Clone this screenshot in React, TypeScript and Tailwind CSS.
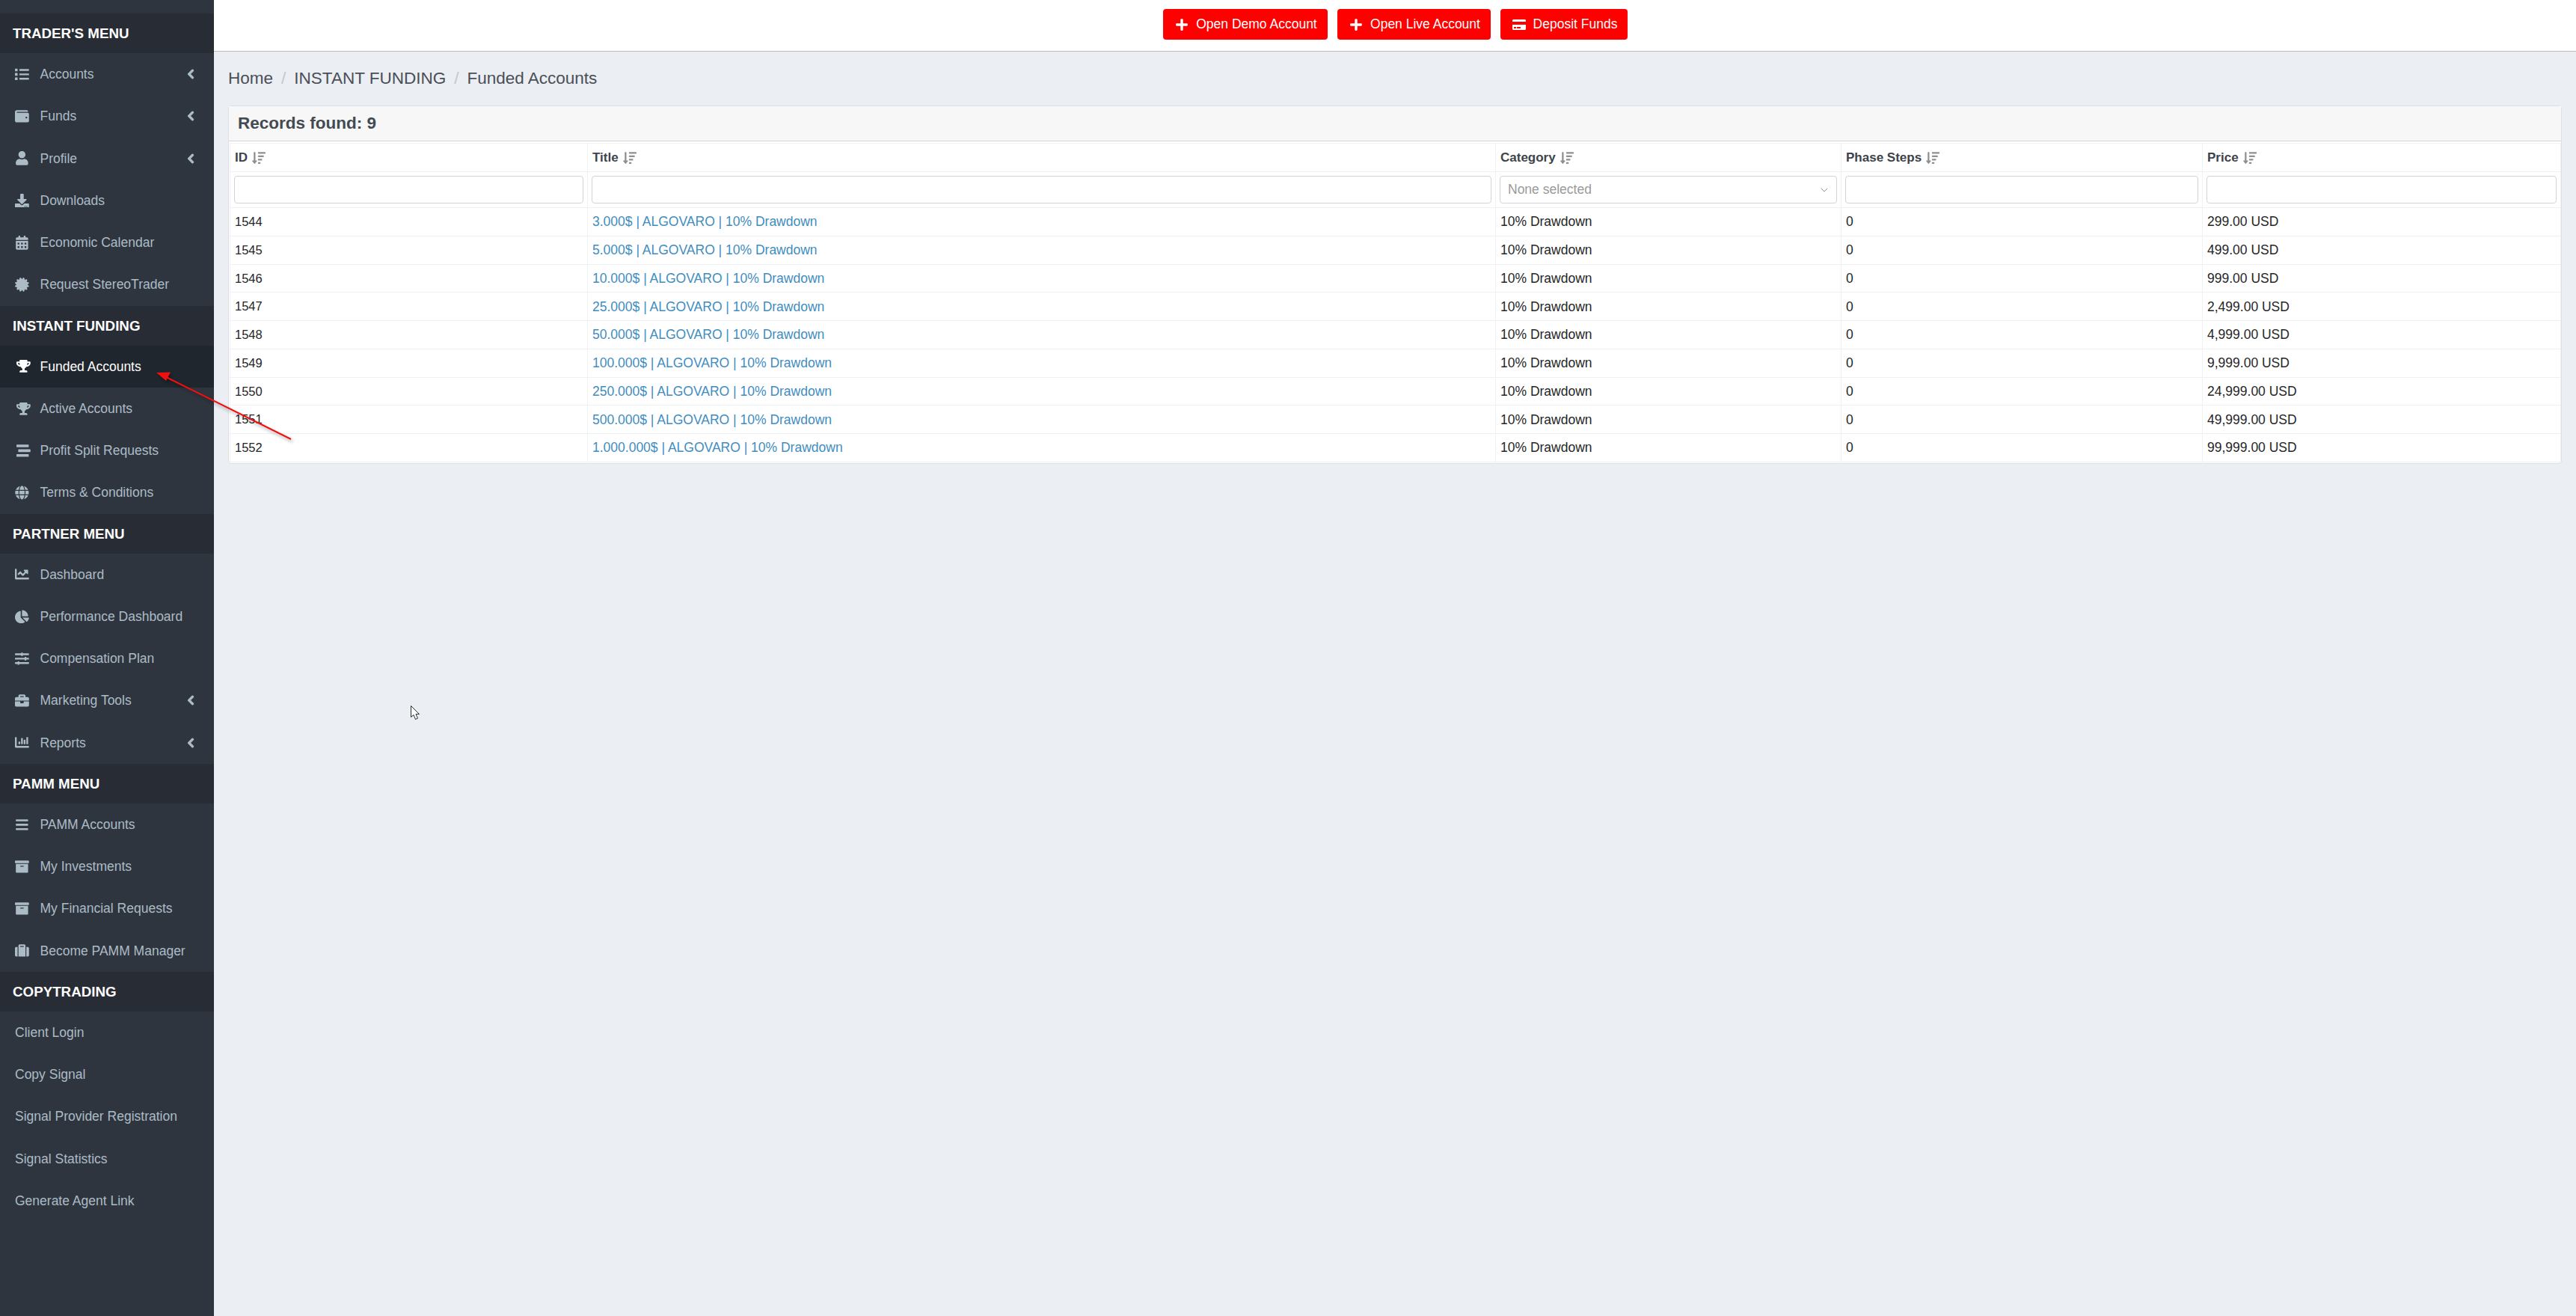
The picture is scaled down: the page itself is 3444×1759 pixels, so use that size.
import { ChevronDown } from "lucide-react";
import {
  FaArchive, FaBars, FaBriefcase, FaCalendarAlt, FaCertificate, FaChartBar, FaChartLine, FaChartPie,
  FaChevronLeft, FaCreditCard, FaDownload, FaGlobe, FaList, FaPlus, FaSlidersH, FaSortAmountDown,
  FaStream, FaSuitcase, FaTrophy, FaUser, FaWallet,
} from "react-icons/fa";

const MENU: any[] = [
  { title: "TRADER'S MENU", items: [
    { l: "Accounts", i: FaList, more: true },
    { l: "Funds", i: FaWallet, more: true },
    { l: "Profile", i: FaUser, more: true },
    { l: "Downloads", i: FaDownload },
    { l: "Economic Calendar", i: FaCalendarAlt },
    { l: "Request StereoTrader", i: FaCertificate },
  ] },
  { title: "INSTANT FUNDING", items: [
    { l: "Funded Accounts", i: FaTrophy, active: true, inset: true },
    { l: "Active Accounts", i: FaTrophy, inset: true },
    { l: "Profit Split Requests", i: FaStream, inset: true },
    { l: "Terms & Conditions", i: FaGlobe },
  ] },
  { title: "PARTNER MENU", items: [
    { l: "Dashboard", i: FaChartLine },
    { l: "Performance Dashboard", i: FaChartPie },
    { l: "Compensation Plan", i: FaSlidersH },
    { l: "Marketing Tools", i: FaBriefcase, more: true },
    { l: "Reports", i: FaChartBar, more: true },
  ] },
  { title: "PAMM MENU", items: [
    { l: "PAMM Accounts", i: FaBars },
    { l: "My Investments", i: FaArchive },
    { l: "My Financial Requests", i: FaArchive },
    { l: "Become PAMM Manager", i: FaSuitcase },
  ] },
  { title: "COPYTRADING", items: [
    { l: "Client Login" },
    { l: "Copy Signal" },
    { l: "Signal Provider Registration" },
    { l: "Signal Statistics" },
    { l: "Generate Agent Link" },
  ] },
];

const ROWS = [
  ["1544", "3.000$", "299.00 USD"],
  ["1545", "5.000$", "499.00 USD"],
  ["1546", "10.000$", "999.00 USD"],
  ["1547", "25.000$", "2,499.00 USD"],
  ["1548", "50.000$", "4,999.00 USD"],
  ["1549", "100.000$", "9,999.00 USD"],
  ["1550", "250.000$", "24,999.00 USD"],
  ["1551", "500.000$", "49,999.00 USD"],
  ["1552", "1.000.000$", "99,999.00 USD"],
];

const COLS = ["ID", "Title", "Category", "Phase Steps", "Price"];

function Sidebar() {
  return (
    <aside className="w-[286px] shrink-0 bg-[#2f353f] pt-[18px] text-[17.5px] text-[#abbcc6]">
      {MENU.map((g) => (
        <div key={g.title}>
          <div className="h-[53px] bg-[#282c35] pl-[17px] text-[18.75px] leading-[53px] font-bold text-white">{g.title}</div>
          {g.items.map((it: any) => {
            const Icon = it.i;
            return (
              <div key={it.l} className={`flex h-[56.25px] items-center pl-[20px] ${it.active ? "bg-[#20262d] text-white" : ""}`}>
                {Icon && (
                  <span className={`w-[33.5px] shrink-0 ${it.inset ? "pl-[2px]" : ""}`}>
                    <Icon className="h-[18.75px] w-auto" />
                  </span>
                )}
                <span>{it.l}</span>
                {it.more && <FaChevronLeft className="mr-[24px] ml-auto h-[14px] w-auto stroke-[40]" />}
              </div>
            );
          })}
        </div>
      ))}
    </aside>
  );
}

function Btn({ icon, label, w }: any) {
  const Icon = icon;
  return (
    <button className={`flex h-[41px] items-center justify-center gap-[10px] rounded-[4px] bg-[#ff0000] pl-[3px] text-[17.5px] text-white ${w}`}>
      <Icon className="h-[18px] w-auto" />
      {label}
    </button>
  );
}

function App() {
  return (
    <div className="relative flex h-[1759px] w-[3444px] overflow-hidden bg-[#ebeef3] font-['Liberation_Sans',Arial,sans-serif]">
      <Sidebar />
      <main className="min-w-0 flex-1">
        <div className="flex h-[69px] items-start justify-center gap-[13px] border-b border-[#bcbcbc] bg-white pt-[12px]">
          <Btn icon={FaPlus} label="Open Demo Account" w="w-[220px]" />
          <Btn icon={FaPlus} label="Open Live Account" w="w-[205px]" />
          <Btn icon={FaCreditCard} label="Deposit Funds" w="w-[170px]" />
        </div>

        <div className="px-[19px]">
          <div className="flex h-[72px] items-center text-[22.5px] text-[#4a4f58]">
            <span>Home</span>
            <span className="mx-[11px] text-[#c4c8cc]">/</span>
            <span>INSTANT FUNDING</span>
            <span className="mx-[11px] text-[#c4c8cc]">/</span>
            <span>Funded Accounts</span>
          </div>

          <div className="rounded-[4px] border border-[#dcdfe5] bg-white pb-[1px]">
            <div className="flex h-[47px] items-center border-b border-[#d4d7dd] bg-[#f7f7f7] pl-[12px] text-[22.5px] font-bold text-[#444a52]">
              Records found: 9
            </div>
            <div className="px-[1px] pt-[2px]">
              <table className="w-full table-fixed border-collapse text-[17.5px] text-[#262626]">
                <colgroup>
                  <col className="w-[478px]" />
                  <col className="w-[1214px]" />
                  <col className="w-[462px]" />
                  <col className="w-[483px]" />
                  <col className="w-[479px]" />
                </colgroup>
                <thead>
                  <tr className="h-[38px] text-[17px] text-[#3d434b]">
                    {COLS.map((c) => (
                      <th key={c} className="border border-[#f0f1f3] px-[6px] text-left font-bold">
                        <span className="flex items-center gap-[6px]">
                          {c}
                          <FaSortAmountDown className="h-[18px] w-auto text-[#8f8f8f]" />
                        </span>
                      </th>
                    ))}
                  </tr>
                  <tr className="h-[48px]">
                    {COLS.map((c) => (
                      <th key={c} className="border border-[#f0f1f3] px-[5px] font-normal">
                        {c === "Category" ? (
                          <div className="flex h-[37px] items-center justify-between rounded-[4px] border border-[#d0d4da] pr-[8px] pl-[10px] text-[#9a9a9a]">
                            None selected
                            <ChevronDown className="h-[16px] w-[16px] text-[#7c7c7c]" strokeWidth={1.25} />
                          </div>
                        ) : (
                          <input className="block h-[37px] w-full rounded-[4px] border border-[#d0d4da] bg-white" />
                        )}
                      </th>
                    ))}
                  </tr>
                </thead>
                <tbody>
                  {ROWS.map((r) => (
                    <tr key={r[0]} className="h-[37.75px]">
                      <td className="border border-[#f0f1f3] px-[6px] text-[16.5px]">{r[0]}</td>
                      <td className="border border-[#f0f1f3] px-[6px] text-[#3f8dbf]">{r[1]} | ALGOVARO | 10% Drawdown</td>
                      <td className="border border-[#f0f1f3] px-[6px]">10% Drawdown</td>
                      <td className="border border-[#f0f1f3] px-[6px]">0</td>
                      <td className="border border-[#f0f1f3] px-[6px]">{r[2]}</td>
                    </tr>
                  ))}
                </tbody>
              </table>
            </div>
          </div>
        </div>
      </main>

      {/* annotation arrow drawn over the screenshot */}
      <svg className="absolute top-0 left-0 drop-shadow-[2px_3px_2px_rgba(0,0,0,0.35)]" width="400" height="600" viewBox="0 0 400 600" fill="none">
        <path d="M389 587L222 504" stroke="#f01010" strokeWidth="2" />
        <path d="M209 498L228 497.5L222 509Z" fill="#f01010" />
      </svg>

      {/* mouse pointer */}
      <svg className="absolute top-[943px] left-[549px]" width="14" height="20" viewBox="0 0 14 20">
        <path d="M0.5 0.5V15.5L4 12.5L6.5 18.5L9.5 17L7 11.5H11.5Z" fill="#fff" stroke="#2a2e35" strokeWidth="1" />
      </svg>
    </div>
  );
}

export default App;
